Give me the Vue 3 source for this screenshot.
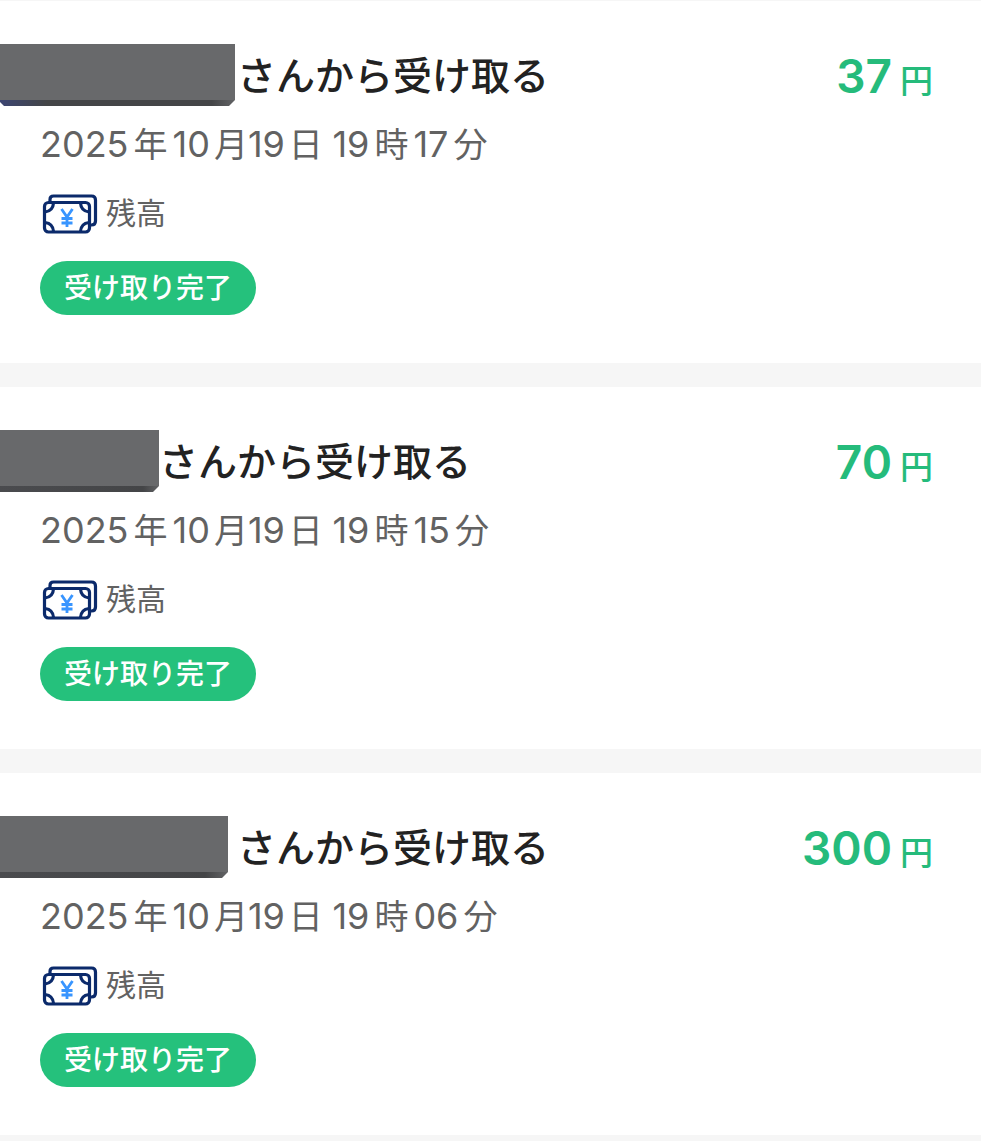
<script setup>
import { ref } from "vue";

const transactions = ref([
  { id: 1, maskWidth: 235, gap: 2, date: "2025年10月19日 19時17分", amount: 37, worn: true },
  { id: 2, maskWidth: 159, gap: 0, date: "2025年10月19日 19時15分", amount: 70, worn: false },
  { id: 3, maskWidth: 228, gap: 9, date: "2025年10月19日 19時06分", amount: 300, worn: false },
]);

// numbers and kanji are set at slightly different sizes
function splitDate(date) {
  return date.match(/\d+|[^\d]+/g);
}

function partClass(part) {
  if (/\d/.test(part)) return "number";
  return /[月日]/.test(part) ? "kanji narrow" : "kanji";
}
</script>

<template>
  <main class="history">
    <article v-for="item in transactions" :key="item.id" class="card">
      <header class="card-header">
        <span
          class="mask"
          :class="{ worn: item.worn }"
          :style="{ width: item.maskWidth + 'px', marginRight: item.gap + 'px' }"
        >
          <span class="mask-face"></span>
        </span>
        <h2>さんから受け取る</h2>
        <p class="amount">{{ item.amount }}<span class="yen">円</span></p>
      </header>
      <div class="card-body">
        <p class="date">
          <span v-for="(part, i) in splitDate(item.date)" :key="i" :class="partClass(part)">{{ part }}</span>
        </p>
        <p class="method">
          <svg class="icon" viewBox="0 0 56 40" aria-hidden="true">
            <g fill="none" stroke="#0b2a6b" stroke-width="3.200">
              <path d="M8 7V5.500Q8 2 11.500 2H49.500Q53.500 2 53.500 6V27Q53.500 31 49.500 31H48" />
              <rect x="2.500" y="8.500" width="45" height="29.500" rx="4" />
              <path d="M11.500 9Q11 17 3 18M38.500 9Q39 17 47 18M3 28.500Q11 29.500 11.500 37.500M47 28.500Q39 29.500 38.500 37.500" />
            </g>
            <path
              d="M19.500 15L25 23L30.500 15M25 23V33M19.500 24.500H30.500M19.500 29H30.500"
              fill="none"
              stroke="#3895ff"
              stroke-width="2.800"
            />
          </svg>
          <span>残高</span>
        </p>
        <span class="status">受け取り完了</span>
      </div>
    </article>
  </main>
</template>

<style>
body {
  margin: 0;
  background-color: #f6f6f6;
}
</style>

<style scoped>
.history {
  display: flex;
  flex-direction: column;
  gap: 24px;
  padding: 1px 0 24px;
  font-family: Inter, "Noto Sans CJK JP", sans-serif;
}
.card {
  padding: 43px 0 48px;
  background-color: #fff;
}
.card-header {
  display: flex;
  align-items: flex-start;
  height: 62px;
  padding-right: 48px;
}
.mask {
  flex: none;
  height: 62px;
  background: linear-gradient(90deg, #4a4b4e, #444547 90%, #626365);
  clip-path: polygon(0 0, 100% 0, 100% 56px, calc(100% - 6px) 100%, 0 100%);
}
.mask.worn {
  background: linear-gradient(90deg, #3c4572, #444547 20%, #444547 90%, #626365);
  clip-path: polygon(0 0, 100% 0, 100% 56px, calc(100% - 6px) 100%, 4px 100%, 0 58px);
}
.mask-face {
  display: block;
  height: 56px;
  background-color: #68696b;
}
h2 {
  margin: 0;
  font-size: 39px;
  font-weight: 500;
  line-height: 64px;
  color: #222;
  white-space: nowrap;
}
.amount {
  margin: 0 0 0 auto;
  font-size: 46px;
  font-weight: 600;
  line-height: 64px;
  color: #25bb7b;
  white-space: nowrap;
}
.yen {
  margin-left: 8px;
  font-size: 33px;
  font-weight: 500;
}
.card-body {
  padding: 12px 40px 0;
}
.date {
  margin: 0;
  font-size: 36px;
  line-height: 52px;
  color: #626262;
  white-space: pre;
}
.kanji {
  margin: 0 5px;
  font-size: 34px;
}
.kanji.narrow {
  margin: 0 0 0 4px;
}
.kanji:last-child {
  margin-right: 0;
}
.method {
  display: flex;
  align-items: center;
  gap: 8px;
  height: 42px;
  margin: 22px 0 0 2px;
  font-size: 30px;
  line-height: 40px;
  color: #626262;
}
.method span {
  padding-bottom: 2px;
}
.icon {
  width: 56px;
  height: 40px;
}
.status {
  display: block;
  width: fit-content;
  margin-top: 26px;
  padding: 0 24px;
  border-radius: 27px;
  background-color: #25c17c;
  color: #fff;
  font-size: 28px;
  font-weight: 500;
  line-height: 54px;
}
</style>
